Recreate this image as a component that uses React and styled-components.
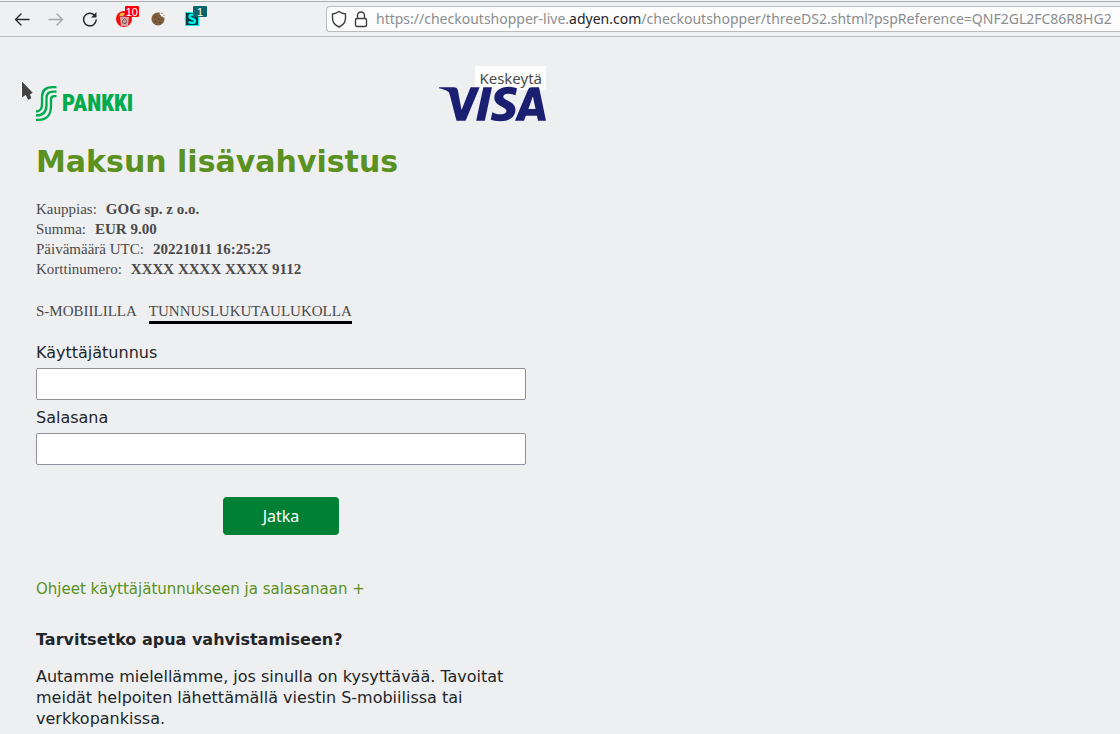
import React from "react";
import styled, { createGlobalStyle } from "styled-components";
import { SiVisa } from "react-icons/si";

const GlobalStyle = createGlobalStyle`
  *, *::before, *::after { box-sizing: border-box; }
  body {
    margin: 0;
    background: #eeeff1;
    color: #222629;
    font-family: "DejaVu Sans", Verdana, sans-serif;
    font-size: 16px;
    line-height: 21px;
  }
`;

const Toolbar = styled.header`
  display: flex;
  align-items: center;
  height: 37px;
  padding: 2px 0 0 5px;
  border-bottom: 1px solid #b9bbbc;
  background: linear-gradient(#f4f5f5 0 1px, #aaadae 1px 2px, #eff0f1 2px);
`;

const ToolButton = styled.button`
  display: flex;
  align-items: center;
  justify-content: center;
  flex: none;
  width: 34px;
  height: 34px;
  padding: 0;
  border: 0;
  background: none;
  color: ${(p) => (p.disabled ? "#a4a6a8" : "#26282b")};
`;

const Extension = styled(ToolButton)`
  position: relative;
`;

const Badge = styled.span`
  position: absolute;
  top: 4px;
  right: 2px;
  min-width: 14px;
  height: 11px;
  padding: 0 1px;
  border-radius: 1px;
  background: ${(p) => p.$color};
  color: #fff;
  font: 11px/12px "Liberation Sans", sans-serif;
  text-align: center;
`;

const AddressBar = styled.div`
  display: flex;
  align-items: center;
  flex: 1;
  min-width: 0;
  height: 26px;
  margin-left: 117px;
  padding-left: 4px;
  border: 1px solid #b9bbbc;
  border-right: 0;
  border-radius: 4px 0 0 4px;
  background: #fdfdfd;
  overflow: hidden;
`;

const SiteIcon = styled.svg`
  flex: none;
  margin-right: 6px;
`;

const Url = styled.span`
  color: #8b8d8f;
  font: 14px/20px "Noto Sans", sans-serif;
  white-space: nowrap;
  strong { color: #232629; font-weight: 400; }
`;

const Page = styled.main`
  max-width: 546px;
  padding: 29px 0 0 36px;
`;

const Brands = styled.div`
  display: flex;
  justify-content: space-between;
  align-items: flex-end;
`;

const BankLogo = styled.div`
  display: flex;
  align-items: center;
  gap: 5px;
  height: 36px;
  color: #00ab4e;
  font: 900 23px/36px "Roboto Condensed", "Open Sans Condensed", "Noto Sans Condensed", Roboto, sans-serif;
`;

const Scheme = styled.div`
  display: flex;
  flex-direction: column;
  align-items: flex-end;
`;

const CancelButton = styled.button`
  height: 24px;
  margin-bottom: -4px;
  padding: 0 4px;
  border: 0;
  background: #fff;
  color: #4a4a4a;
  font: 15px/24px "Noto Sans", sans-serif;
`;

const VisaLogo = styled(SiVisa)`
  position: relative;
  display: block;
  width: 107px;
  height: 36px;
  color: #1a1f71;
`;

const Title = styled.h1`
  margin: 21px 0 18px;
  color: #5a9120;
  font-size: 30px;
  line-height: 38px;
`;

const Details = styled.dl`
  margin: 0;
  color: #4a4a4a;
  font: 15px/20px "Liberation Serif", "Times New Roman", serif;
`;

const Detail = styled.div`
  display: flex;
  gap: 9px;
  dt, dd { margin: 0; }
  dd { font-weight: 700; }
`;

const Tabs = styled.nav`
  display: flex;
  gap: 12px;
  margin: 22px 0 18px;
`;

const Tab = styled.a`
  border-bottom: 3px solid ${(p) => (p.$active ? "#000" : "transparent")};
  color: #4a4a4a;
  font: 15px/20px "Liberation Serif", "Times New Roman", serif;
  text-decoration: none;
`;

const Form = styled.form`
  display: flex;
  flex-direction: column;
  max-width: 490px;
`;

const Label = styled.label`
  margin-bottom: 5px;
`;

const TextBox = styled.input`
  width: 100%;
  height: 32px;
  margin-bottom: 7px;
  padding: 4px 8px;
  border: 1px solid #8f8f9d;
  border-radius: 2px;
  background: #fff;
  font: inherit;
`;

const Submit = styled.button`
  align-self: center;
  width: 116px;
  height: 38px;
  margin: 25px 0 43px;
  border: 0;
  border-radius: 4px;
  background: #008035;
  color: #fff;
  font: 16px/22px "Noto Sans", sans-serif;
`;

const HelpLink = styled.a`
  color: #5a9120;
  font-size: 15px;
  text-decoration: none;
`;

const HelpTitle = styled.h2`
  margin: 29px 0 16px;
  font-size: 16px;
  line-height: 21px;
`;

const HelpText = styled.p`
  max-width: 490px;
  margin: 0;
`;

const Pointer = styled.svg`
  position: absolute;
  top: 79px;
  left: 19px;
`;

const details = [
  ["Kauppias:", "GOG sp. z o.o."],
  ["Summa:", "EUR 9.00"],
  ["Päivämäärä UTC:", "20221011 16:25:25"],
  ["Korttinumero:", "XXXX XXXX XXXX 9112"],
];

const Arrow = ({ back }) => (
  <svg width="16" height="16" viewBox="0 0 16 16" fill="none" stroke="currentColor" strokeWidth="1.4" strokeLinecap="round" strokeLinejoin="round">
    <path d={back ? "M15 8.5H1.5M7 3 1.5 8.5 7 14" : "M1 8.5h13.5M9 3l5.5 5.5L9 14"} />
  </svg>
);

export default function App() {
  return (
    <>
      <GlobalStyle />
      <Toolbar>
        <ToolButton aria-label="Takaisin"><Arrow back /></ToolButton>
        <ToolButton aria-label="Eteenpäin" disabled><Arrow /></ToolButton>
        <ToolButton aria-label="Lataa uudelleen">
          <svg width="16" height="16" viewBox="0 0 16 16" fill="none" stroke="currentColor" strokeWidth="1.5" strokeLinecap="round">
            <path d="M14.2 9A6.3 6.3 0 1 1 12.5 4.2" />
            <path d="M14.5 1v5.5H9z" fill="currentColor" stroke="none" />
          </svg>
        </ToolButton>
        <Extension aria-label="Evästeiden poisto">
          <svg width="16" height="16" viewBox="0 0 16 16">
            <circle cx="8" cy="8" r="8" fill="#f01010" />
            <path d="M3 5l2-3.500 4 1-2 3z" fill="#f5b83d" />
            <path d="M4 6h9l-1 9H5z" fill="#dba0a5" />
            <path d="M3.5 5.5h10" stroke="#b94248" />
            <path d="M6.5 9.5l2-1.500 2 1.500M10.500 10.500l-1 2H8M6.3 10.5l1 2" fill="none" stroke="#3c3034" strokeWidth=".8" />
          </svg>
          <Badge $color="#fb0007">10</Badge>
        </Extension>
        <Extension aria-label="Evästeet">
          <svg width="14" height="14" viewBox="0 0 14 14">
            <path d="M7 .5C3 .5.5 3.5.5 7S3.5 13.5 7 13.5 13.5 10.5 13.5 7c0-.8-.1-1-.3-1.5-1 .2-1.5-.2-1.7-1-1.2.3-2-.3-1.7-1.5C8.7 3 8.2 1.8 9 .8 8.5.6 8 .5 7 .5z" fill="#815e3e" />
            <g fill="#4e3523"><circle cx="4" cy="5" r=".7" /><circle cx="7.5" cy="7" r=".7" /><circle cx="4.5" cy="9.5" r=".8" /><circle cx="9" cy="10.5" r=".7" /><circle cx="11" cy="7.5" r=".5" /></g>
            <g fill="#815e3e"><circle cx="11" cy="1.5" r=".7" /><circle cx="13" cy="3.5" r=".6" /></g>
          </svg>
        </Extension>
        <Extension aria-label="Stylus">
          <svg width="16" height="16" viewBox="0 0 16 16">
            <rect x="1.5" y="1.5" width="13" height="13" fill="#073b40" stroke="#00f5ee" />
            <path d="M0 8h2M14 8h2" stroke="#00f5ee" />
            <path d="M11.5 4.5C9 3 5.5 3.5 5.5 5.5c0 2.5 5.5 2 5.5 4.5 0 2-3.5 2.5-6.5 1" fill="none" stroke="#00f5ee" strokeWidth="2.4" />
          </svg>
          <Badge $color="#08666a">1</Badge>
        </Extension>
        <AddressBar>
          <SiteIcon width="17" height="18" viewBox="0 0 17 18" fill="none" stroke="#3c3e40" strokeWidth="1.4" strokeLinejoin="round">
            <path d="M8 1.5c2 1.5 4 2.2 6.5 2.5v4c0 4-3 7.5-6.5 9C4.5 15.5 1.5 12 1.5 8V4c2.5-.3 4.5-1 6.5-2.5z" />
          </SiteIcon>
          <SiteIcon width="16" height="18" viewBox="0 0 16 18" fill="none" stroke="#3c3e40" strokeWidth="1.4">
            <rect x="1.5" y="8.5" width="11" height="8" rx="1.5" />
            <path d="M3.5 8.5V5.5a3.5 3.5 0 0 1 7 0v3" />
          </SiteIcon>
          <Url>https://checkoutshopper-live.<strong>adyen.com</strong>/checkoutshopper/threeDS2.shtml?pspReference=QNF2GL2FC86R8HG2</Url>
        </AddressBar>
      </Toolbar>
      <Page>
        <Brands>
          <BankLogo>
            <svg width="21" height="36" viewBox="0 0 21 36" fill="none" stroke="currentColor" strokeWidth="2.3">
              <path d="M20.5 1.2H16.5C9.5 1.2 6 5 6 11v7c0 5-1.5 7.5-6 7.5" />
              <path d="M20.5 5.7H17.5c-4.5 0-7 2-7 6.3v7c0 7-3.5 10.5-10.5 10.5" />
              <path d="M20.5 10.2H18.5c-2.5 0-3.5 1-3.5 3V20c0 9-4.5 13.8-12 13.8H0" />
            </svg>
            <span>PANKKI</span>
          </BankLogo>
          <Scheme>
            <CancelButton type="button">Keskeytä</CancelButton>
            <VisaLogo viewBox="0 8 24 8" aria-label="Visa" />
          </Scheme>
        </Brands>
        <Title>Maksun lisävahvistus</Title>
        <Details>
          {details.map(([term, value]) => (
            <Detail key={term}><dt>{term}</dt><dd>{value}</dd></Detail>
          ))}
        </Details>
        <Tabs>
          <Tab href="#mobiili">S-MOBIILILLA</Tab>
          <Tab href="#tunnusluku" $active>TUNNUSLUKUTAULUKOLLA</Tab>
        </Tabs>
        <Form>
          <Label htmlFor="user">Käyttäjätunnus</Label>
          <TextBox id="user" type="text" />
          <Label htmlFor="password">Salasana</Label>
          <TextBox id="password" type="password" />
          <Submit type="button">Jatka</Submit>
        </Form>
        <HelpLink href="#ohjeet">Ohjeet käyttäjätunnukseen ja salasanaan +</HelpLink>
        <HelpTitle>Tarvitsetko apua vahvistamiseen?</HelpTitle>
        <HelpText>
          Autamme mielellämme, jos sinulla on kysyttävää. Tavoitat meidät helpoiten lähettämällä viestin S-mobiilissa tai verkkopankissa.
        </HelpText>
      </Page>
      <Pointer width="18" height="25" viewBox="0 0 18 25" aria-hidden="true">
        <path d="M2.5 1.5v18l4-3 2.5 5 4-2-1.5-4 3-1.5z" fill="#444" stroke="#fff" />
      </Pointer>
    </>
  );
}
